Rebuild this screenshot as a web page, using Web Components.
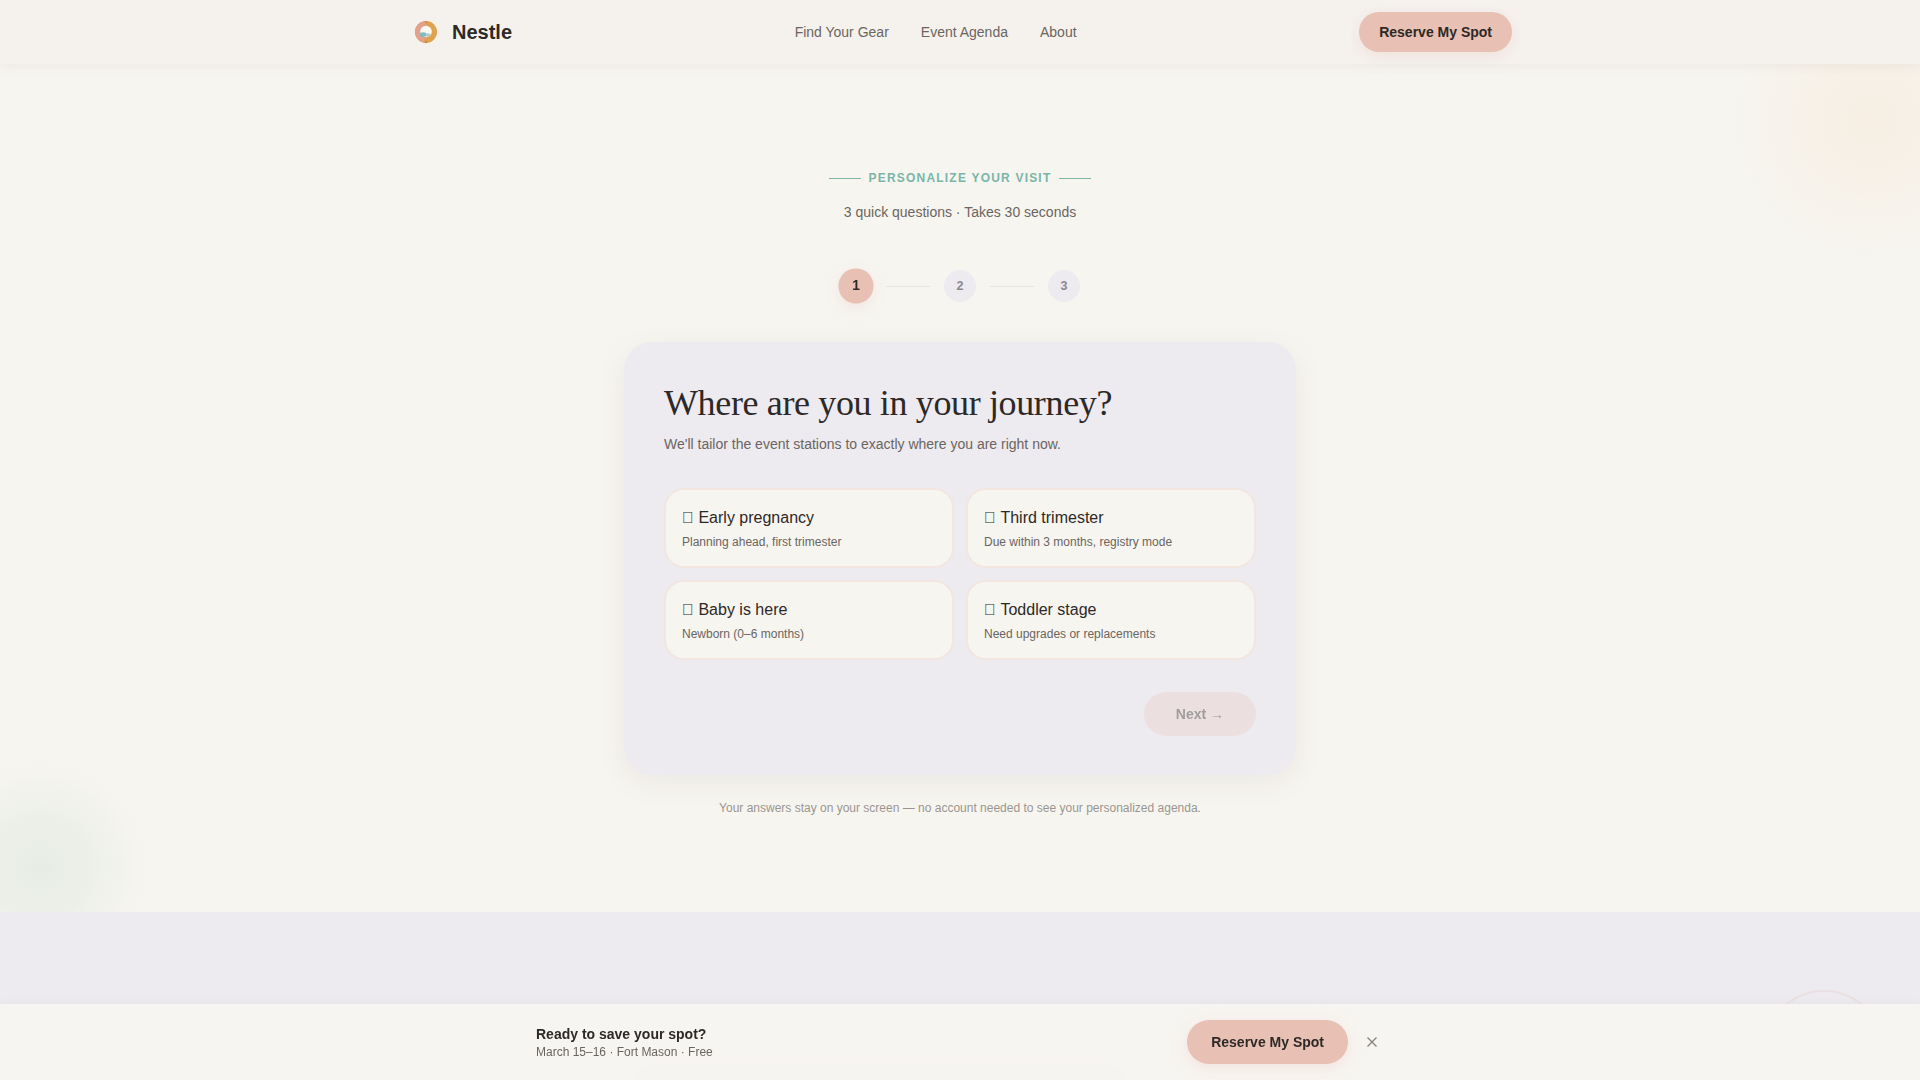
<!DOCTYPE html>
<html lang="en"><head><meta charset="utf-8"><title>Nestle</title>
<style>
html,body{margin:0;padding:0;background:#f7f5f0;}
body{font-family:"Liberation Sans",Arial,sans-serif;color:#2d2926;line-height:1.6;height:1080px;overflow:hidden;position:relative;}
</style></head><body>
<site-header></site-header>
<quiz-hero></quiz-hero>
<lower-band></lower-band>
<sticky-bar></sticky-bar>
<script>
function def(name, html){
  customElements.define(name, class extends HTMLElement{
    connectedCallback(){
      if(this.shadowRoot) return;
      const r=this.attachShadow({mode:'open'});
      r.innerHTML=typeof html==='function'?html(this):html;
    }
  });
}
def('pill-button',el=>`<style>
:host{display:inline-flex;align-items:center;justify-content:center;box-sizing:border-box;border-radius:999px;background:#e8c0b4;color:#2d2926;font-weight:700;white-space:nowrap;height:${el.getAttribute('h')||40}px;padding:0 ${el.getAttribute('px')||20}px;font-size:${el.getAttribute('fs')||14}px;box-shadow:0 4px 16px rgba(232,192,180,.35);}
:host([disabled]){opacity:.4;box-shadow:none;background:rgba(232,192,180,.7);}
</style><slot></slot>`);
def('site-logo',`<style>:host{display:flex;align-items:center;gap:8px;font-size:20px;font-weight:700;color:#2d2926;}
svg{width:36px;height:36px;display:block;}</style>
<svg viewBox="0 0 36 36" aria-hidden="true">
<defs><filter id="b" x="-20%" y="-20%" width="140%" height="140%"><feGaussianBlur stdDeviation=".5"/></filter></defs>
<g filter="url(#b)">
<circle cx="18" cy="18" r="11" fill="#dfa24f"/>
<path d="M18 18 L17 7 A11 11 0 0 0 16 28.8Z" fill="#e3a08c"/>
<circle cx="18" cy="17.5" r="5.8" fill="#fbf8f4"/>
<ellipse cx="15.2" cy="20.6" rx="3.4" ry="2.3" fill="#7fbcc0"/>
<ellipse cx="20" cy="21" rx="2.6" ry="1.7" fill="#b9c6ca"/>
<circle cx="18" cy="28" r="1.3" fill="#c58d4c"/>
<circle cx="18" cy="8" r="1.1" fill="#c58d4c"/>
</g></svg><slot></slot>`);
def('nav-links',`<style>:host{display:flex;gap:32px;font-size:14px;color:#6b6560;}</style><slot></slot>`);
def('site-header',`<style>
:host{display:flex;box-sizing:border-box;height:64px;align-items:center;justify-content:center;background:#f5f2ee;box-shadow:0 2px 12px rgba(45,41,38,.06);position:relative;z-index:5;}
.in{width:1104px;display:flex;align-items:center;justify-content:space-between;}
</style><div class="in"><site-logo>Nestle</site-logo>
<nav-links><span>Find Your Gear</span><span>Event Agenda</span><span>About</span></nav-links>
<pill-button>Reserve My Spot</pill-button></div>`);
def('eye-brow',`<style>:host{display:flex;align-items:center;justify-content:center;gap:8px;font-size:12px;font-weight:700;letter-spacing:.1em;text-transform:uppercase;color:#7ab5a8;line-height:19px;}
i{display:block;width:32px;height:1.5px;background:#7ab5a8;}</style><i></i><slot></slot><i></i>`);
def('step-dots',`<style>:host{display:flex;align-items:center;justify-content:center;height:36px;}
b{display:flex;align-items:center;justify-content:center;width:32px;height:32px;border-radius:50%;background:#edebf0;color:#8c8790;font-size:12.5px;font-weight:700;}
b.on{background:#e8c0b4;color:#2d2926;transform:scale(1.1);box-shadow:0 4px 12px rgba(232,192,180,.25);}
i{display:block;width:44px;height:1px;margin:0 14px;background:#e8e4de;}</style>
<b class="on">1</b><i></i><b>2</b><i></i><b>3</b>`);
def('option-card',`<style>:host{display:block;box-sizing:border-box;height:80px;padding:15px 16px;background:#f7f5f0;border:2px solid rgba(232,192,180,.27);border-radius:20px;}
.t{font-size:16px;line-height:26px;color:#2d2926;}
.s{font-size:12px;line-height:19px;margin-top:2px;color:#6b6560;}</style>
<div class="t"><slot name="t"></slot></div><div class="s"><slot name="s"></slot></div>`);
def('quiz-card',`<style>:host{display:block;box-sizing:border-box;width:672px;height:433px;padding:40px;background:#edebf0;border-radius:28px;box-shadow:0 8px 32px rgba(45,41,38,.06);}
h2{margin:0;font:400 36px/43px "Liberation Serif","Times New Roman",serif;letter-spacing:-.36px;color:#2d2926;}
p{margin:8px 0 32px;font-size:14px;line-height:23px;color:#6b6560;}
.g{display:grid;grid-template-columns:1fr 1fr;gap:12px;}
.a{display:flex;justify-content:flex-end;margin-top:32px;}</style>
<h2>Where are you in your journey?</h2>
<p>We'll tailor the event stations to exactly where you are right now.</p>
<div class="g">
<option-card><span slot="t">&#xE000; Early pregnancy</span><span slot="s">Planning ahead, first trimester</span></option-card>
<option-card><span slot="t">&#xE000; Third trimester</span><span slot="s">Due within 3 months, registry mode</span></option-card>
<option-card><span slot="t">&#xE000; Baby is here</span><span slot="s">Newborn (0–6 months)</span></option-card>
<option-card><span slot="t">&#xE000; Toddler stage</span><span slot="s">Need upgrades or replacements</span></option-card>
</div>
<div class="a"><pill-button disabled h="44" px="32">Next →</pill-button></div>`);
def('quiz-hero',`<style>:host{display:block;position:relative;box-sizing:border-box;height:848px;padding-top:105px;overflow:hidden;text-align:center;}
.blob{position:absolute;border-radius:50%;}
.o{left:1735px;top:-79px;width:270px;height:270px;background:radial-gradient(circle closest-side,rgba(245,210,170,.19) 0,rgba(245,215,180,.13) 50%,rgba(245,215,180,0) 100%);}
.g{left:-65px;top:698px;width:210px;height:210px;background:radial-gradient(circle closest-side,rgba(150,195,175,.17) 0,rgba(150,195,175,.1) 50%,rgba(150,195,175,0) 100%);}
.in{position:relative;display:flex;flex-direction:column;align-items:center;}
.sub{font-size:14px;line-height:22px;color:#6b6560;margin-top:13px;}
step-dots{margin-top:45px;}
quiz-card{margin-top:38px;text-align:left;}
.note{font-size:12px;line-height:19px;color:#9a9590;margin-top:24px;}</style>
<div class="blob o"></div><div class="blob g"></div>
<div class="in"><eye-brow>Personalize your visit</eye-brow>
<div class="sub">3 quick questions · Takes 30 seconds</div>
<step-dots></step-dots>
<quiz-card></quiz-card>
<div class="note">Your answers stay on your screen — no account needed to see your personalized agenda.</div></div>`);
def('lower-band',`<style>:host{display:block;position:relative;height:168px;background:#edebf0;overflow:hidden;}
.c{position:absolute;left:1764px;top:78px;width:120px;height:120px;box-sizing:border-box;border-radius:50%;border:2px solid rgba(232,192,180,.25);}
.h{position:absolute;left:640px;top:158px;width:480px;height:10px;background:rgba(45,41,38,.12);}</style>
<div class="c"></div><div class="h"></div>`);
def('sticky-bar',`<style>:host{position:fixed;left:0;right:0;bottom:0;height:76px;display:flex;justify-content:center;align-items:center;background:rgba(247,245,240,.96);backdrop-filter:blur(8px);box-shadow:0 -2px 12px rgba(45,41,38,.03);z-index:6;}
.in{width:848px;display:flex;align-items:center;justify-content:space-between;}
.t{font-size:14px;font-weight:700;line-height:20px;color:#2d2926;}
.s{font-size:12px;line-height:18px;margin-top:-1px;color:#6b6560;}
.r{display:flex;align-items:center;gap:12px;}
svg{display:block;width:24px;height:24px;}</style>
<div class="in"><div><div class="t">Ready to save your spot?</div><div class="s">March 15–16 · Fort Mason · Free</div></div>
<div class="r"><pill-button h="44" px="24">Reserve My Spot</pill-button>
<svg viewBox="0 0 24 24" aria-hidden="true"><path d="M7.5 7.5 L16.5 16.5 M16.5 7.5 L7.5 16.5" stroke="#85817c" stroke-width="1.3" fill="none"/></svg></div></div>`);
</script>
</body></html>
